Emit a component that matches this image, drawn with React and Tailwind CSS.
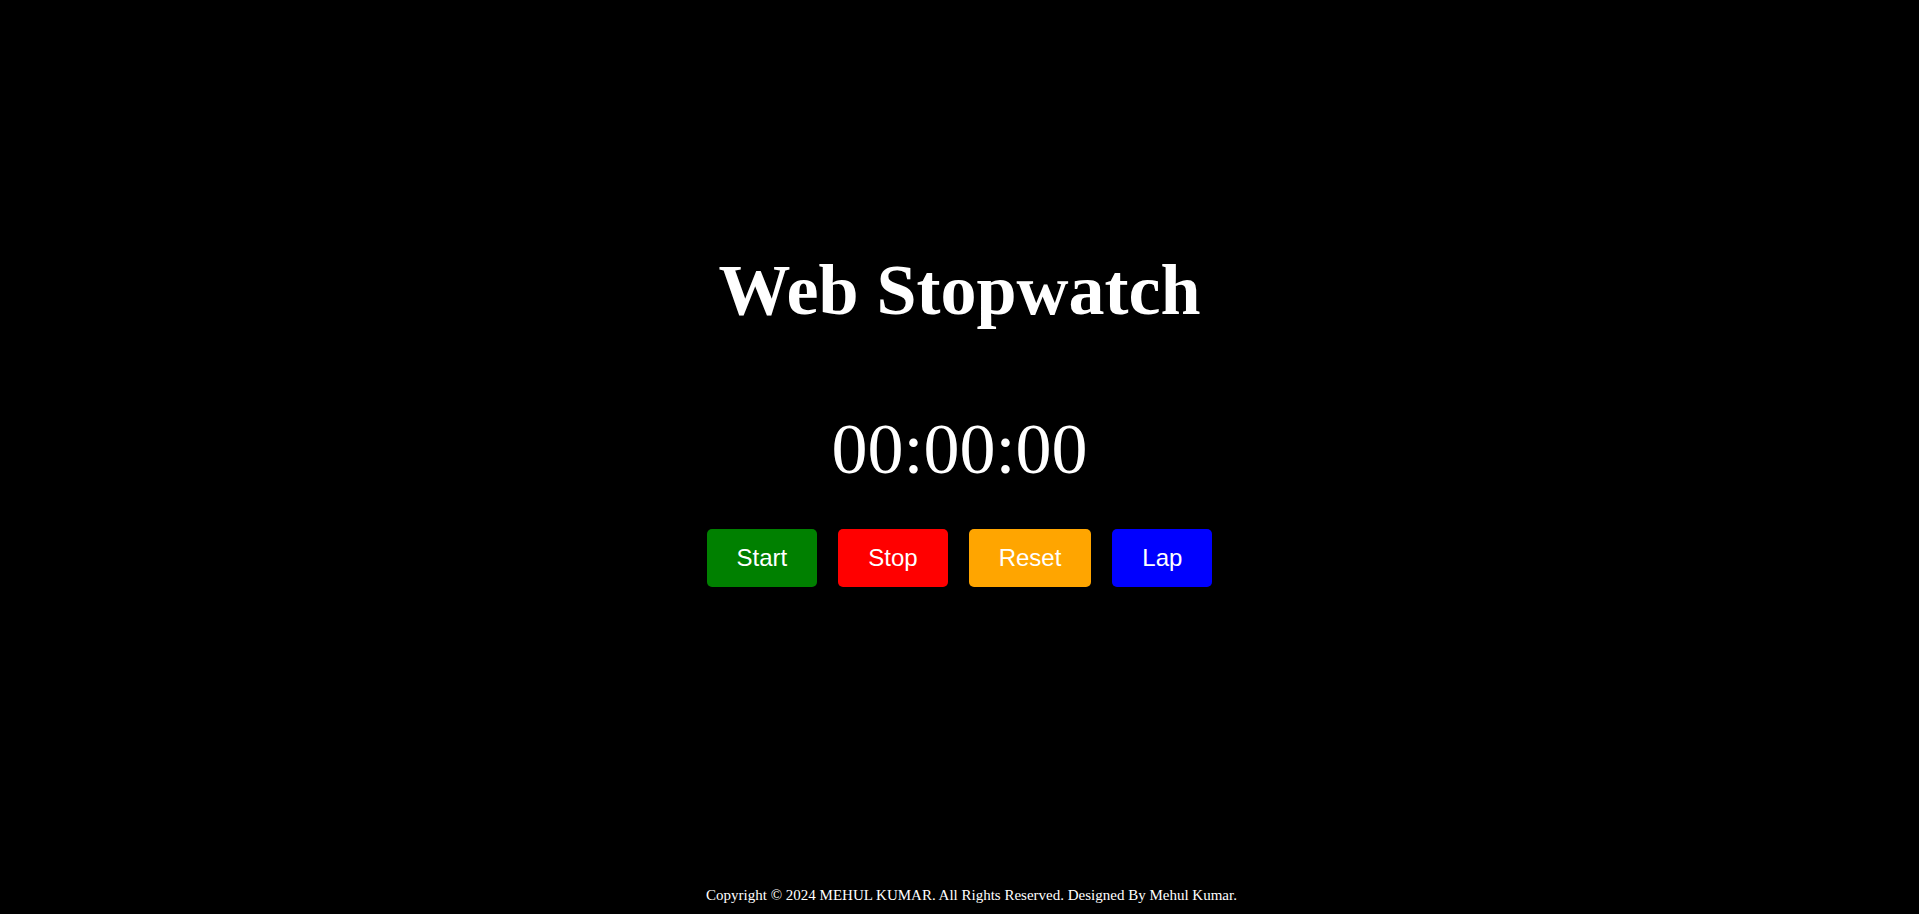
export default function App() {
  const buttons = [
    { label: "Start", cls: "bg-[#008000]" },
    { label: "Stop", cls: "bg-[#ff0000]" },
    { label: "Reset", cls: "bg-[#ffa500]" },
    { label: "Lap", cls: "bg-[#0000ff]" },
  ];
  return (
    <div className="min-h-screen bg-black text-white flex flex-col font-['Liberation_Serif','Times_New_Roman',serif]">
      <main className="flex-1 flex flex-col items-center pt-[249px]">
        <h1 className="text-[72px] leading-[83px] font-bold">Web Stopwatch</h1>
        <div className="mt-[76px] text-[72px] leading-[83px]">00:00:00</div>
        <div className="mt-[38px] flex gap-[21px]">
          {buttons.map((b) => (
            <button
              key={b.label}
              className={`${b.cls} text-white rounded-[5px] px-[30px] py-[15px] text-[24px] leading-[28px] font-['Liberation_Sans',Arial,sans-serif]`}
            >
              {b.label}
            </button>
          ))}
        </div>
      </main>
      <footer className="text-center text-[15px] leading-[17px] pb-[10px] pl-[24px]">
        Copyright © 2024 MEHUL KUMAR. All Rights Reserved. Designed By Mehul Kumar.
      </footer>
    </div>
  );
}
